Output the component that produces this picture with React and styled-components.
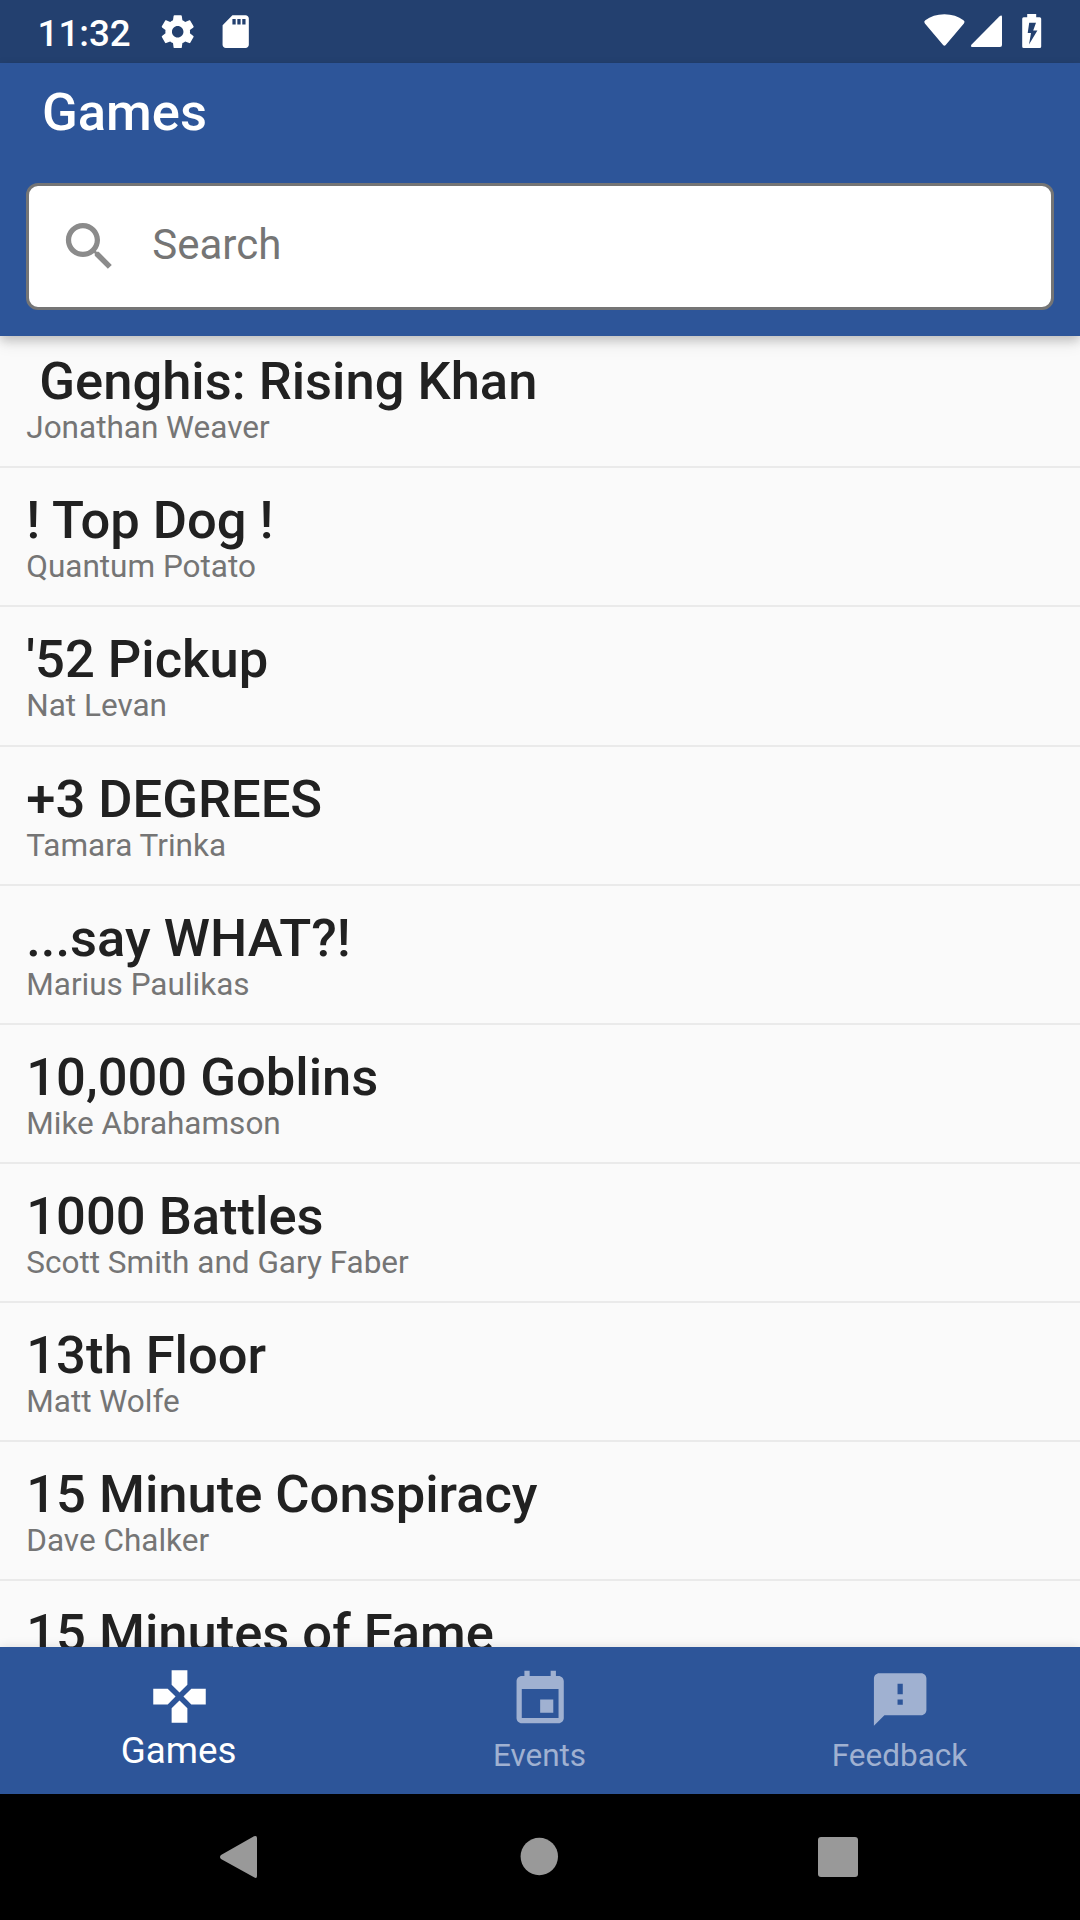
import React from "react";
import styled, { createGlobalStyle } from "styled-components";

const GlobalStyle = createGlobalStyle`
  * { box-sizing: border-box; }
  html, body { margin: 0; padding: 0; background: #000; }
  body { font-family: Roboto, "Noto Sans", sans-serif; }
`;

const Screen = styled.div`
  display: flex;
  flex-direction: column;
  width: 1080px;
  height: 1920px;
  overflow: hidden;
  background: #fafafa;
`;

const StatusBar = styled.div`
  display: flex;
  align-items: center;
  justify-content: space-between;
  flex: none;
  height: 63px;
  padding: 0 39px 0 37.5px;
  background: #23406f;
  color: #fff;
`;

const StatusGroup = styled.div`
  display: flex;
  align-items: center;
  margin-bottom: ${(p) => p.$lift || 0}px;
`;

const Clock = styled.span`
  width: 120.9px;
  font-size: 36.75px;
  font-weight: 500;
  line-height: 43px;
  padding-top: 3px;
`;

const StatusIcon = styled.svg`
  flex: none;
  overflow: visible;
  width: ${(p) => p.$w}px;
  height: ${(p) => p.$h}px;
  margin-left: ${(p) => p.$gap || 0}px;
  fill: currentColor;
`;

const AppBar = styled.header`
  display: flex;
  flex-direction: column;
  flex: none;
  position: relative;
  z-index: 1;
  height: 273px;
  padding: 18px 26px 26px;
  background: #2d5599;
  box-shadow: 0 4px 10px rgba(0, 0, 0, 0.2), 0 10px 14px rgba(0, 0, 0, 0.06);
`;

const AppTitle = styled.h1`
  margin: 0 0 0 16px;
  height: 102px;
  color: #fff;
  font-size: 52.5px;
  font-weight: 500;
  line-height: 62px;
`;

const SearchBox = styled.div`
  display: flex;
  align-items: center;
  height: 127px;
  padding-left: 29px;
  border: 3px solid #757575;
  border-radius: 12px;
  background: #fff;
`;

const SearchIcon = styled.svg`
  width: 63px;
  height: 63px;
  fill: #8b8b8b;
`;

const SearchHint = styled.span`
  margin-left: 31.25px;
  padding-bottom: 4px;
  color: #757575;
  font-size: 42px;
  line-height: 50px;
`;

const GameList = styled.main`
  flex: 1;
  min-height: 0;
  overflow: hidden;
`;

const ListTrack = styled.div`
  margin-top: -6.82px;
`;

const GameRow = styled.article`
  height: 139.125px;
  padding: 20.96px 26.25px 0;
  border-bottom: 2px solid #eaeaea;
`;

const GameTitle = styled.h2`
  margin: 0;
  color: #212121;
  font-size: 52.5px;
  font-weight: 500;
  line-height: 62px;
  white-space: pre;
`;

const GameAuthor = styled.p`
  margin: -3px 0 0;
  color: #757575;
  font-size: 31.5px;
  line-height: 37px;
`;

const TabBar = styled.nav`
  display: grid;
  grid-template-columns: repeat(3, 1fr);
  flex: none;
  position: relative;
  z-index: 1;
  height: 147px;
  background: #2d5599;
  box-shadow: 0 0 10px rgba(0, 0, 0, 0.12);
`;

const Tab = styled.div`
  display: flex;
  flex-direction: column;
  align-items: center;
  padding-top: ${(p) => (p.$active ? 18 : 21)}px;
  padding-right: 1px;
  color: ${(p) => (p.$active ? "#fff" : "#a0b1d1")};
`;

const TabIcon = styled.svg`
  width: 63px;
  height: 63px;
  overflow: visible;
  fill: currentColor;
`;

const TabLabel = styled.span`
  margin-top: ${(p) => (p.$active ? 1 : 6)}px;
  padding-right: ${(p) => (p.$active ? 2 : 0)}px;
  font-size: ${(p) => (p.$active ? 36.75 : 31.5)}px;
  line-height: ${(p) => (p.$active ? 43 : 37)}px;
`;

const SystemNav = styled.div`
  display: flex;
  align-items: center;
  justify-content: space-between;
  flex: none;
  height: 126px;
  padding: 0 221px 0 219px;
  background: #000;
`;

const NavGlyph = styled.svg`
  width: ${(p) => p.$w}px;
  height: 44px;
  overflow: visible;
  fill: #999;
`;

const games = [
  [" Genghis: Rising Khan", "Jonathan Weaver"],
  ["! Top Dog !", "Quantum Potato"],
  ["'52 Pickup", "Nat Levan"],
  ["+3 DEGREES", "Tamara Trinka"],
  ["...say WHAT?!", "Marius Paulikas"],
  ["10,000 Goblins", "Mike Abrahamson"],
  ["1000 Battles", "Scott Smith and Gary Faber"],
  ["13th Floor", "Matt Wolfe"],
  ["15 Minute Conspiracy", "Dave Chalker"],
  ["15 Minutes of Fame", ""],
];

const tabs = [
  {
    label: "Games",
    active: true,
    viewBox: "0 0 24 24",
    path: "M15 7.5V2H9v5.5l3 3 3-3zM7.5 9H2v6h5.5l3-3-3-3zM9 16.5V22h6v-5.5l-3-3-3 3zM16.5 9l-3 3 3 3H22V9h-5.5z",
  },
  {
    label: "Events",
    viewBox: "-0.25 0 24 24",
    path: "M17 12h-5v5h5v-5zM16 1v2H8V1H6v2H5c-1.11 0-1.99.9-1.99 2L3 19c0 1.1.89 2 2 2h14c1.1 0 2-.9 2-2V5c0-1.1-.9-2-2-2h-1V1h-2zm3 18H5V8h14v11z",
  },
  {
    label: "Feedback",
    viewBox: "-0.25 0 24 24",
    path: "M20 2H4c-1.1 0-1.99.9-1.99 2L2 22l4-4h14c1.1 0 2-.9 2-2V4c0-1.1-.9-2-2-2zm-7 12h-2v-2h2v2zm0-4h-2V6h2v4z",
  },
];

export default function App() {
  return (
    <>
      <GlobalStyle />
      <Screen>
        <StatusBar>
          <StatusGroup>
            <Clock>11:32</Clock>
            <StatusIcon $w={39.4} $h={39.4} viewBox="0 0 24 24">
              <path d="M19.43 12.98c.04-.32.07-.64.07-.98s-.03-.66-.07-.98l2.11-1.65c.19-.15.24-.42.12-.64l-2-3.46c-.12-.22-.39-.3-.61-.22l-2.49 1c-.52-.4-1.08-.73-1.69-.98l-.38-2.65C14.46 2.18 14.25 2 14 2h-4c-.25 0-.46.18-.49.42l-.38 2.65c-.61.25-1.17.59-1.69.98l-2.49-1c-.23-.09-.49 0-.61.22l-2 3.46c-.13.22-.07.49.12.64l2.11 1.65c-.04.32-.07.65-.07.98s.03.66.07.98l-2.11 1.65c-.19.15-.24.42-.12.64l2 3.46c.12.22.39.3.61.22l2.49-1c.52.4 1.08.73 1.69.98l.38 2.65c.03.24.24.42.49.42h4c.25 0 .46-.18.49-.42l.38-2.65c.61-.25 1.17-.59 1.69-.98l2.49 1c.23.09.49 0 .61-.22l2-3.46c.12-.22.07-.49-.12-.64l-2.11-1.65zM12 15.5c-1.93 0-3.5-1.57-3.5-3.5s1.57-3.5 3.5-3.5 3.5 1.57 3.5 3.5-1.57 3.5-3.5 3.5z" />
            </StatusIcon>
            <StatusIcon $w={39.4} $h={39.4} $gap={18.6} viewBox="0 0 24 24">
              <path d="M18 2h-8L4.02 8 4 20c0 1.1.9 2 2 2h12c1.1 0 2-.9 2-2V4c0-1.1-.9-2-2-2zm-6 5.6h-2V4.3h2v3.3zm3 0h-2V4.3h2v3.3zm3 0h-2V4.3h2v3.3z" />
            </StatusIcon>
          </StatusGroup>
          <StatusGroup $lift={1}>
            <StatusIcon $w={42} $h={34} viewBox="0 0 42 34">
              <path d="M1.9 9.4Q.3 7.8 2.3 6.3 10 .3 21.4 .3t19.1 6q2 1.5.4 3.1L22.7 31.1q-1.3 1.4-2.6 0z" />
            </StatusIcon>
            <StatusIcon $w={32} $h={34} $gap={5} viewBox="0 0 32 34">
              <path d="M29.3 2.5Q32 .5 32 3v28q0 2-2 2H2.3Q0 33 1.4 30.8z" />
            </StatusIcon>
            <StatusIcon $w={20} $h={34} $gap={19} viewBox="-0.7 0 20 34">
              <path
                fillRule="evenodd"
                d="M5.5 0h9v3.2H18q1.5 0 1.5 1.5v27.8q0 1.5-1.5 1.5H2q-1.5 0-1.5-1.5V4.7q0-1.5 1.5-1.5h3.5zM7.5 8.7 6 19h3.3L7.3 30.5 15.7 16.6H11.5L14.3 8.7z"
              />
            </StatusIcon>
          </StatusGroup>
        </StatusBar>
        <AppBar>
          <AppTitle>Games</AppTitle>
          <SearchBox>
            <SearchIcon viewBox="0 0 24 24">
              <path d="M15.5 14h-.79l-.28-.27C15.41 12.59 16 11.11 16 9.5 16 5.91 13.09 3 9.5 3S3 5.91 3 9.5 5.91 16 9.5 16c1.61 0 3.09-.59 4.23-1.57l.27.28v.79l5 4.99L20.49 19l-4.99-5zm-6 0C7.01 14 5 11.99 5 9.5S7.01 5 9.5 5 14 7.01 14 9.5 11.99 14 9.5 14z" />
            </SearchIcon>
            <SearchHint>Search</SearchHint>
          </SearchBox>
        </AppBar>
        <GameList>
          <ListTrack>
            {games.map(([title, author]) => (
              <GameRow key={title}>
                <GameTitle>{title}</GameTitle>
                <GameAuthor>{author}</GameAuthor>
              </GameRow>
            ))}
          </ListTrack>
        </GameList>
        <TabBar>
          {tabs.map((t) => (
            <Tab key={t.label} $active={t.active}>
              <TabIcon viewBox={t.viewBox}>
                <path d={t.path} />
              </TabIcon>
              <TabLabel $active={t.active}>{t.label}</TabLabel>
            </Tab>
          ))}
        </TabBar>
        <SystemNav>
          <NavGlyph $w={40} viewBox="0 0 40 44">
            <path d="M35 1.3Q38 0 38 3V41Q38 44 35 42.3L2 24Q0 22 2 20z" />
          </NavGlyph>
          <NavGlyph $w={40} viewBox="0 0 40 44">
            <circle cx="21.3" cy="21.5" r="18.7" />
          </NavGlyph>
          <NavGlyph $w={42} viewBox="0 0 42 44">
            <rect x="1" y="2" width="40" height="40" rx="3" />
          </NavGlyph>
        </SystemNav>
      </Screen>
    </>
  );
}
